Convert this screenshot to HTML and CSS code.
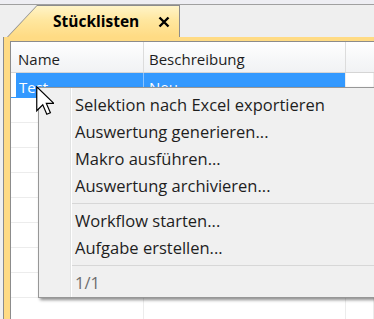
FILE: index.html
```html
<!DOCTYPE html>
<html>
	<head>
		<meta charset="UTF-8">
		<title>Stücklisten</title>
		<link rel="stylesheet" href="styles.css">
	</head>

	<body>
		<div class="page">
			<div class="topbar"></div>
			<div class="tabstrip">
				<div class="tab">
					<span class="tab_title">Stücklisten</span>
					<svg class="tab_close" width="12" height="12" viewBox="0 0 12 12">
						<path d="M1.5 1.5 L10.5 10.5 M10.5 1.5 L1.5 10.5" stroke="#000" stroke-width="2.4" fill="none"/>
					</svg>
				</div>
			</div>
			<div class="frame">
				<div class="grid">
					<div class="g_head">
						<div class="g_cell c1">Name</div>
						<div class="g_cell c2">Beschreibung</div>
						<div class="g_cell c3"></div>
					</div>
					<div class="g_row selected">
						<div class="gutter"></div>
						<div class="g_cell c1">Test</div>
						<div class="g_cell c2">Neu</div>
						<div class="g_cell c3"></div>
					</div>
					<div class="g_row"><div class="gutter"></div><div class="g_cell c1"></div><div class="g_cell c2"></div><div class="g_cell c3"></div></div>
					<div class="g_row"><div class="gutter"></div><div class="g_cell c1"></div><div class="g_cell c2"></div><div class="g_cell c3"></div></div>
					<div class="g_row"><div class="gutter"></div><div class="g_cell c1"></div><div class="g_cell c2"></div><div class="g_cell c3"></div></div>
					<div class="g_row"><div class="gutter"></div><div class="g_cell c1"></div><div class="g_cell c2"></div><div class="g_cell c3"></div></div>
					<div class="g_row"><div class="gutter"></div><div class="g_cell c1"></div><div class="g_cell c2"></div><div class="g_cell c3"></div></div>
					<div class="g_row"><div class="gutter"></div><div class="g_cell c1"></div><div class="g_cell c2"></div><div class="g_cell c3"></div></div>
					<div class="g_row"><div class="gutter"></div><div class="g_cell c1"></div><div class="g_cell c2"></div><div class="g_cell c3"></div></div>
					<div class="g_row"><div class="gutter"></div><div class="g_cell c1"></div><div class="g_cell c2"></div><div class="g_cell c3"></div></div>
					<div class="g_row"><div class="gutter"></div><div class="g_cell c1"></div><div class="g_cell c2"></div><div class="g_cell c3"></div></div>
				</div>
			</div>

			<!-- Kontextmenü -->
			<div class="menu">
				<div class="m_item">Selektion nach Excel exportieren</div>
				<div class="m_item">Auswertung generieren...</div>
				<div class="m_item">Makro ausführen...</div>
				<div class="m_item">Auswertung archivieren...</div>
				<div class="m_sep"></div>
				<div class="m_item">Workflow starten...</div>
				<div class="m_item">Aufgabe erstellen...</div>
				<div class="m_sep"></div>
				<div class="m_item disabled">1/1</div>
			</div>

			<svg class="cursor" width="18" height="30" viewBox="0 0 12 20">
				<path d="M0.5 0.5 V16.5 L4.5 12.5 L7.2 18.8 L9.6 17.8 L6.9 11.6 H11.9 Z" fill="#fff" stroke="#000" stroke-width="0.8" stroke-linejoin="miter"/>
			</svg>
		</div>
	</body>
</html>
```

FILE: styles.css
```css
* {
	margin: 0;
	padding: 0;
	box-sizing: border-box;
}

body {
	background: #f0f0f0;
}

.page {
	position: relative;
	width: 374px;
	height: 319px;
	overflow: hidden;
	background: #f0f0f0;
	font-family: "Open Sans", "Noto Sans", sans-serif;
	font-size: 15px;
	color: #1e1e1e;
}

.topbar {
	height: 5px;
	background: #eeeef3;
	border-bottom: 1px solid #a0a0a0;
}

.tabstrip {
	display: flex;
	height: 32px;
	padding-left: 7px;
	background: #efefef;
}

.tab {
	position: relative;
	display: flex;
	align-items: center;
	width: 173px;
	height: 32px;
	padding-left: 46px;
	background: #8c8c8c;
	clip-path: polygon(0 100%, 30px 0, 100% 0, 100% 100%);
}

.tab::before {
	content: "";
	position: absolute;
	top: 1px;
	left: 1px;
	right: 1px;
	bottom: 0;
	background: linear-gradient(to bottom, #fff4c8 0%, #ffe79f 45%, #ffdb84 100%);
	clip-path: polygon(0 100%, 29px 0, 100% 0, 100% 100%);
}

.tab_title {
	position: relative;
	font-weight: bold;
	font-size: 15.5px;
	color: #000;
}

.tab_close {
	position: relative;
	margin-left: auto;
	margin-right: 10px;
	margin-top: 2px;
}

.frame {
	height: 282px;
	margin-left: 3px;
	padding: 4px 0 0 6px;
	border-left: 1px solid #8c8c8c;
	background: #ffdb84;
}

.grid {
	height: 100%;
	background: #fff;
	border-left: 1px solid #8c8c8c;
	border-top: 1px solid #8c8c8c;
}

.g_head {
	display: flex;
	height: 31px;
	border-bottom: 1px solid #d5d5d5;
	background: linear-gradient(to bottom, #ffffff 0%, #f7f8f9 50%, #f1f2f4 100%);
}

.g_head .g_cell {
	display: flex;
	align-items: center;
	padding-top: 3px;
	border-right: 1px solid #dcdcdc;
}

.g_head .c1 {
	width: 133px;
	padding-left: 7px;
}

.g_head .c2 {
	width: 202px;
	padding-left: 5px;
}

.g_cell.c3 {
	flex: 1;
	border-right: 0;
}

.g_row {
	display: flex;
	height: 25px;
	border-bottom: 1px solid #ececec;
}

.gutter {
	width: 5px;
}

.g_row .g_cell {
	display: flex;
	align-items: center;
	padding-top: 3px;
	border-right: 1px solid #ececec;
}

.g_row .c1 {
	width: 128px;
	padding-left: 3px;
}

.g_row .c2 {
	width: 202px;
	padding-left: 5px;
}

.g_row.selected {
	border-bottom-color: #3399ff;
}

.g_row.selected .c1,
.g_row.selected .c2 {
	background: #3399ff;
	color: #fff;
}

.g_row.selected .c1 {
	border-right-color: #8cc4ff;
}

.g_row.selected .c2 {
	border-right-color: #ececec;
}

.menu {
	position: absolute;
	left: 38px;
	top: 87px;
	width: 350px;
	padding: 3px 0 1px 0;
	background: linear-gradient(to right, #f0f0f0 0, #f0f0f0 31px, #e2e3e3 31px, #e2e3e3 32px, #ffffff 32px, #ffffff 33px, #f0f0f0 33px);
	border: 1px solid #979797;
	box-shadow: 2px 2px 3px rgba(0, 0, 0, 0.45);
	font-size: 16.5px;
}

.m_item {
	height: 27px;
	line-height: 27px;
	padding-left: 36px;
	color: #1e1e1e;
	white-space: nowrap;
}

.m_item.disabled {
	color: #6d6d6d;
}

.m_sep {
	height: 8px;
	margin-left: 33px;
	padding-top: 4px;
}

.m_sep::before {
	content: "";
	display: block;
	height: 1px;
	background: #d7d7d7;
}

.cursor {
	position: absolute;
	left: 36px;
	top: 86px;
}
```
